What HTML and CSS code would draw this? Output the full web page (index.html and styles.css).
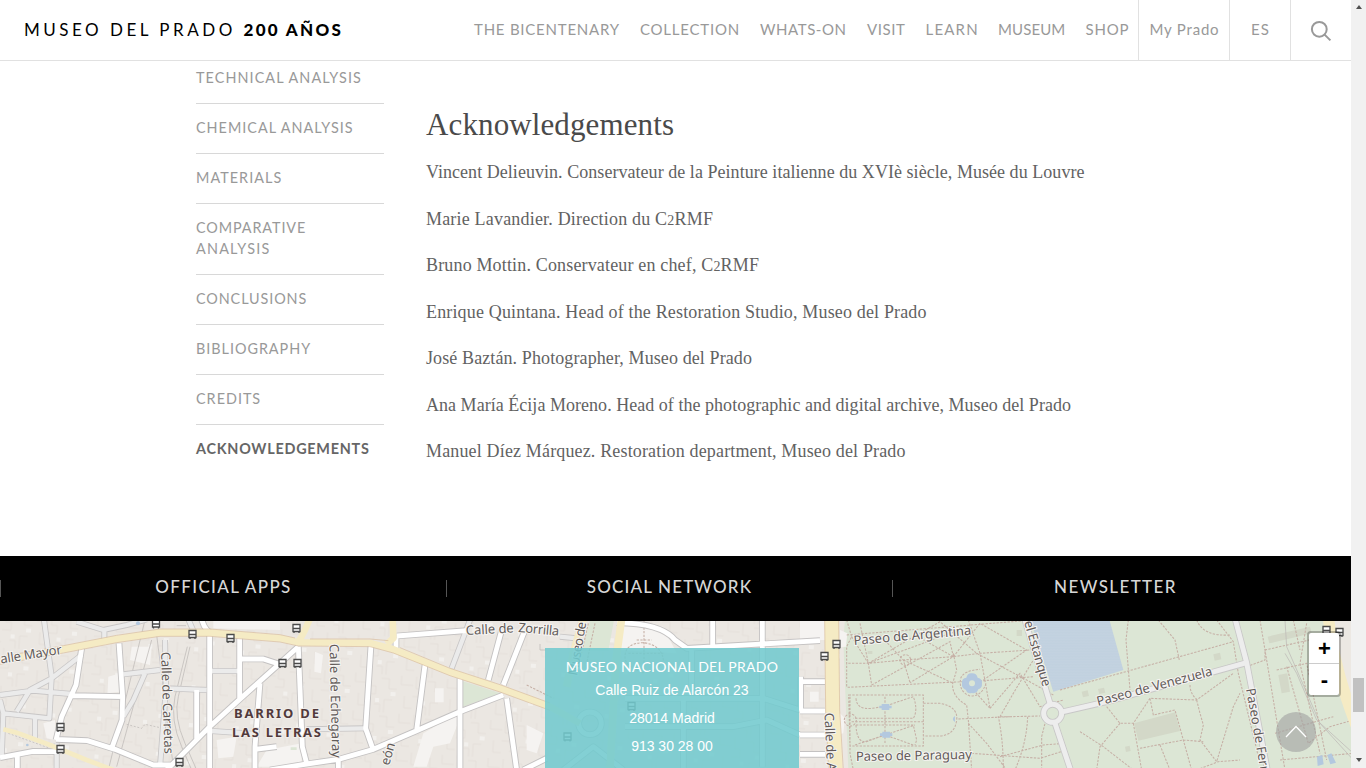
FILE: index.html
```html
<!DOCTYPE html>
<html lang="en">
<head>
<meta charset="utf-8">
<title>Acknowledgements - Museo Nacional del Prado</title>
<link rel="stylesheet" href="styles.css">
</head>
<body>
<div class="page">
  <header class="header">
    <a class="logo"><span class="logo-name">MUSEO DEL PRADO</span><span class="logo-years">200 AÑOS</span></a>
    <nav class="nav">
      <a>THE BICENTENARY</a><a class="n2">COLLECTION</a><a class="n3">WHATS-ON</a><a class="n4">VISIT</a><a class="n5">LEARN</a><a class="n6">MUSEUM</a><a class="n7">SHOP</a>
    </nav>
    <a class="cell my-prado">My Prado</a>
    <a class="cell lang">ES</a>
    <a class="cell search"><svg width="22" height="22" viewBox="0 0 22 22"><circle cx="9.3" cy="9.3" r="7.4"/><path d="M14.6 14.6L20.4 20.4"/></svg></a>
  </header>

  <main class="main">
    <ul class="index">
      <li class="i1">TECHNICAL ANALYSIS</li>
      <li class="i2">CHEMICAL ANALYSIS</li>
      <li class="i3">MATERIALS</li>
      <li class="i4">COMPARATIVE <span class="i5">ANALYSIS</span></li>
      <li class="i6">CONCLUSIONS</li>
      <li class="i7">BIBLIOGRAPHY</li>
      <li class="i8">CREDITS</li>
      <li class="current">ACKNOWLEDGEMENTS</li>
    </ul>
    <article class="article">
      <h2>Acknowledgements</h2>
      <p class="p1">Vincent Delieuvin. Conservateur de la Peinture italienne du XVIè siècle, Musée du Louvre</p>
      <p class="p2">Marie Lavandier. Direction du C<small>2</small>RMF</p>
      <p class="p3">Bruno Mottin. Conservateur en chef, C<small>2</small>RMF</p>
      <p class="p4">Enrique Quintana. Head of the Restoration Studio, Museo del Prado</p>
      <p class="p5">José Baztán. Photographer, Museo del Prado</p>
      <p class="p6">Ana María Écija Moreno. Head of the photographic and digital archive, Museo del Prado</p>
      <p class="p7">Manuel Díez Márquez. Restoration department, Museo del Prado</p>
    </article>
  </main>

  <div class="tabs">
    <a class="t1">OFFICIAL APPS</a><a class="t2">SOCIAL NETWORK</a><a class="t3">NEWSLETTER</a>
  </div>

  <section class="map">
    <svg class="map-canvas" width="1351" height="147" viewBox="0 621 1351 147">
      <defs>
        <g id="bus"><path d="M-3.5 -4H3.5V3H-3.5ZM-3.5 0H3.5M-2.5 3V4.6M2.5 3V4.6" fill="#fff" stroke="#4a4a4a" stroke-width="1.3"/></g>
        <pattern id="blocks" width="46" height="38" patternUnits="userSpaceOnUse" patternTransform="rotate(4)">
          <path d="M3 0V12H9V20H0M14 4H22V14H30M18 38V25H26M34 0V9H46M38 20V32H46M8 30H14V38" fill="none" stroke="#e2ddd7" stroke-width=".7"/>
          <path d="M24 17h5v4h-5zM9 24h4v4h-4z" fill="#f2f0ed"/>
        </pattern>
        <pattern id="waves" width="10" height="8" patternUnits="userSpaceOnUse"><path d="M0 4Q2.5 1.500 5 4T10 4" fill="none" stroke="#b7cadc" stroke-width=".8"/></pattern>
        <g id="lanes">
          <g transform="translate(0 610) scale(.33333)">
            <path d="M132 30L155 200L148 325L10 310M245 135L155 205L90 240L50 305M0 255L100 242L215 252M0 270L10 310L5 440M370 193L480 180M435 190L400 270L370 320M495 90L498 235L620 240M498 235L480 470M635 183H715M635 363L765 372M105 325V390M170 400V480M230 35L310 60L380 45L440 28M313 60V95M565 28L580 62"/>
            <path d="M1410 30L1355 175M920 358L1095 355M1680 80L1730 85"/>
          </g>
        </g>
        <g id="roads">
          <g transform="translate(0 610) scale(.33333)">
            <path d="M245 115L228 225L185 320L168 390M357 100L368 260L366 330L335 415M215 257L370 260M168 388L262 392L345 418L460 465H520M0 443L100 424L170 425M52 430V480M629 75V480M719 85V265M895 110L840 160L719 268L629 350L535 445L500 480M719 147L790 147L845 165M590 240V390M780 220L765 410V480M765 418L830 410M605 28Q615 65 640 72"/>
            <path d="M895 110L907 410L920 460M1113 105L1097 355L1118 415M1275 165L1250 360M810 480L920 462L1015 448L1120 418L1250 362L1380 305L1510 255M1380 205V480M1190 78L1400 62M1505 60L1465 210M1575 60L1510 225M1520 265L1550 480M1188 85V115M1015 452V480M1640 445L1570 480"/>
            <path d="M2138 30V110M2287 30V470M1850 38Q1985 40 2025 90L2060 115L2460 92M2400 215H2475M2400 303H2475M2400 375H2475M2400 433H2475M2402 200V300M2075 120V250M1875 265L2290 265L2400 300M1875 350H2200L2300 330L2400 375M2050 260V480M1690 480L1780 410L1870 480"/>
            <circle cx="1770" cy="340" r="34"/>
          </g>
        </g>
        <g id="avenues">
          <g transform="translate(0 610) scale(.33333)">
            <path stroke-width="20" d="M0 152L190 118L350 87L480 68H630L840 85L895 97L1110 99L1180 118L1350 186L1500 235L1650 290L1740 340M895 97L915 60L930 25M1178 25L1180 85L1160 102"/>
            <path stroke-width="14" d="M10 358L50 368L150 405L260 450L340 480"/>
            <path stroke-width="23" d="M1865 25L1848 150L1830 480M1750 25L1720 130L1700 230"/>
            <path stroke-width="42" d="M2495 20L2498 300L2507 485"/>
            <path stroke-width="34" d="M3985 20Q4000 170 4070 350L4120 480"/>
          </g>
        </g>
        <g id="walks">
          <g transform="translate(0 610) scale(.33333)">
            <path d="M3075 30L3150 280M3190 305L3320 275L3740 158M3705 25L3740 158L3802 480M3165 340L3215 490"/>
            <circle cx="3158" cy="310" r="27"/>
          </g>
        </g>
      </defs>

      <rect y="620" width="1351" height="148" fill="#ebe7e2"/>
      <rect y="620" width="840" height="148" fill="url(#blocks)"/>
      <g transform="translate(0 610) scale(.33333)">
        <g fill="#f5f3f1">
          <path d="M395 110H455L450 165L390 150ZM325 200L360 190V245L322 250ZM650 390L710 380L700 440L655 445ZM640 28L840 28V60L640 55ZM130 340L165 330V390L140 385ZM1305 235h26v42h-26zM945 125l24 10-6 55-20-5zM1580 345l50 25-20 60-30-10zM2430 245h26v30h-26zM800 420L905 400V470H770ZM1390 300L1350 400L1300 410L1280 470H1240L1270 370ZM2400 30H2480V90H2400ZM1870 40L1990 50L2030 130L1860 120Z"/>
        </g>
        <path d="M1385 212L1500 250L1385 292ZM1770 30H1842L1825 122H1745ZM872 412h18v8h-18zM2530 90L2535 28H4060V480H2545Z" fill="#dce6d5"/>
        <path d="M3985 20H4060V350Q4000 200 3985 20Z" fill="#ece8e3"/>
        <path d="M2520 60L2542 70L2538 110L2520 112ZM2520 310L2535 325L2530 370L2520 372Z" fill="#f5f3f1"/>
        <path d="M3090 25H3327L3370 180L3160 245Z" fill="#c3d2e0"/>
        <path d="M3090 25H3327L3370 180L3160 245Z" fill="url(#waves)"/>
        <g fill="#d3d8c8">
          <path d="M3402 340L3525 307L3540 363L3415 392ZM3803 80L3930 50L3935 70L3808 100ZM3835 195L3862 190L3870 245L3845 250ZM3640 133l20-5 4 20-20 4ZM3245 245l18-4 4 17-18 4ZM3294 237l18-4 4 15-18 4ZM3375 410l14-3 3 16-14 3ZM3050 60h16v18h-16ZM2603 123h14v9h-14Z"/>
        </g>
        <g fill="none" stroke="#bdb9b6" stroke-width="2.200">
          <path d="M435 30L325 480M455 90L350 470M470 75L520 470M570 110L535 260Q520 320 555 400L590 480M562 110L525 260Q510 330 545 410L575 480M3855 130L3890 190L3950 330L4060 430M3855 30L3860 110L3960 340L4060 450"/>
          <path stroke-dasharray="6 5" d="M380 343L425 355L435 343L490 355M25 370L150 415"/>
          <path d="M1620 102v18h18M530 47h28"/>
        </g>
      </g>
      <g transform="translate(0 610) scale(.33333)" fill="none" stroke="#c6b0a6" stroke-width="3.200" stroke-dasharray="7 4">
        <path d="M1910 90H1955M1925 185Q1875 170 1875 140Q1875 100 1930 98Q1985 105 1990 150Q1975 185 1925 188ZM1932 30V180M1885 130H1990M1765 40L1740 150M1785 40L1760 160M1580 225L1660 265"/>
        <path d="M2540 30L2555 80L2540 110V230M2540 75L3100 30M2555 80L2605 160L2710 150L2860 140L2940 130L3090 120M2580 40L2605 160L2615 225M2605 160L2750 75L2820 35L2930 130L3080 210L3160 255M2640 75L2710 150L2730 218M2710 150L2860 220M2545 160L2605 160L2850 70M2615 225L2850 95L2860 140L2730 218M2860 140L2745 75M2905 30L2940 130L2970 295M2860 140L2940 40L3080 120L2950 210M2970 295L3060 190L3120 290L3190 270M3000 320L3040 250L3100 150M2543 232L2950 212L3100 200M2860 130L2870 180L2858 220Q2855 260 2900 285L2905 330L2915 480M2958 220Q2945 260 2910 258Q2875 245 2882 205Q2890 182 2940 178"/>
        <path d="M2546 255H2770V408H2550ZM2568 265Q2570 300 2615 295L2650 290L2740 260Q2755 300 2740 325H2560M2568 345H2740L2750 390L2745 405M2568 345Q2570 400 2600 395L2655 375L2740 405M2655 260V400M2555 335H2770M2565 405L2655 375L2745 345M2770 280H2820Q2875 290 2870 330Q2865 375 2820 378H2770M2550 260V430L2560 480M2875 327L3030 320L3120 318M3030 320L2995 320Q3010 390 3010 480M3083 320Q3080 400 3045 480M2905 340L2960 400L3020 480M3000 440L3130 405L3190 400M3140 320L3125 380V480M2915 430L3120 445L3200 420M2920 240L2970 295"/>
        <circle cx="2716" cy="150" r="16"/><circle cx="2551" cy="330" r="18"/>
        <path d="M3180 240L3700 95M3385 30L3378 90L3390 240M3475 30L3525 90L3538 150M3590 30Q3610 80 3690 75M3650 30L3700 95L3715 190L3780 460M3320 290L3360 340H3400L3450 265L3590 270L3700 190M3590 270L3600 310L3610 345L3600 390L3650 455L3700 290L3720 250M3400 340L3425 480M3360 340L3300 410L3290 480M3240 365L3310 410L3400 480M3420 415L3550 390L3610 395M3450 265L3460 315L3525 300L3550 390L3575 480M3480 405L3510 480M3570 225Q3570 250 3590 268M3590 480L3655 455L3720 450M3740 170L3795 150V120L3950 85M3780 30L3795 120L3855 480M3830 180L3920 160L3980 450M3860 170L3925 400L3990 350L4060 330M3900 160L3960 430M3920 40L3900 160M3840 450L4060 430M3825 370L4000 320M3880 30L3900 120"/>
      </g>
      <g fill="none" stroke-linejoin="round">
        <use href="#lanes" stroke="#c8c6c6" stroke-width="18"/>
        <use href="#roads" stroke="#c4c2c2" stroke-width="20"/>
        <use href="#walks" stroke="#c8c7c7" stroke-width="20"/>
        <use href="#lanes" stroke="#ebebeb" stroke-width="13"/>
        <use href="#roads" stroke="#fff" stroke-width="14.500"/>
        <use href="#walks" stroke="#ededed" stroke-width="15"/>
        <use href="#avenues" stroke="#f5ebc4"/>
      </g>
      <g transform="translate(0 610) scale(.33333)" fill="none" stroke="#d9bc9b" stroke-width="2">
        <path d="M0 141L190 107L350 76L480 57H630L840 74L885 84M0 163L190 129L350 98L480 79H630L840 96L895 108L1110 110L1180 129L1350 197L1500 246L1650 301M930 87H1110L1165 92M1200 113L1350 175L1500 224L1650 279M2474 30L2477 300L2486 480M2516 30L2519 300L2530 480"/>
      </g>
      <g fill="#b3c8df" transform="translate(0 610) scale(.33333)">
        <path d="M2916 190Q2930 190 2933 203Q2948 206 2946 220Q2947 235 2935 238Q2930 252 2916 249Q2902 253 2898 240Q2884 235 2886 220Q2884 205 2899 203Q2903 188 2916 190Z"/>
        <circle cx="2916" cy="220" r="9" fill="#dce6d5"/>
        <path d="M2645 282h23v5h7v8h-7v5h-23v-5h-7v-8h7zM2647 365h23v5h7v8h-7v5h-23v-5h-7v-8h7zM2865 318Q2852 327 2865 336ZM3951 440l16-5 4 28-18 5ZM3982 435l12-5 14 28-17 5Z"/>
        <circle cx="414" cy="40" r="6"/><circle cx="82" cy="405" r="4"/>
      </g>
      <g>
        <use href="#bus" x="156" y="624"/><use href="#bus" x="192.500" y="634.500"/><use href="#bus" x="230.500" y="638.500"/><use href="#bus" x="296.500" y="628.500"/><use href="#bus" x="282.500" y="663.500"/><use href="#bus" x="297.500" y="663.500"/><use href="#bus" x="60.500" y="727.500"/><use href="#bus" x="60.500" y="749.500"/><use href="#bus" x="179.500" y="762.500"/><use href="#bus" x="824.500" y="656.500"/><use href="#bus" x="836.500" y="644.500"/><use href="#bus" x="631.500" y="706.500"/><use href="#bus" x="567.500" y="737"/><use href="#bus" x="1326.500" y="630.500"/><use href="#bus" x="1339.500" y="632.500"/>
      </g>
      <g class="streets">
        <text transform="translate(1 663.500) rotate(-9)" textLength="62">alle Mayor</text>
        <text transform="translate(161 652) rotate(88)" textLength="102">Calle de Carretas</text>
        <text transform="translate(329.500 644) rotate(88.700)" textLength="114">Calle de Echegaray</text>
        <text transform="translate(466 635) rotate(-3)" textLength="48">Calle de</text>
        <text transform="translate(518 632) rotate(5)" textLength="41">Zorrilla</text>
        <text transform="translate(577 676) rotate(-80)" textLength="54">Museo de</text>
        <text transform="translate(389 766) rotate(-74)" textLength="23">eón</text>
        <text transform="translate(824.500 713) rotate(87.500)" textLength="58">Calle de A</text>
        <text transform="translate(854 645) rotate(-5)" textLength="118">Paseo de Argentina</text>
        <text transform="translate(856 761) rotate(-1)" textLength="116">Paseo de Paraguay</text>
        <text transform="translate(1024 622) rotate(74)" textLength="68">el Estanque</text>
        <text transform="translate(1098 706) rotate(-15)" textLength="119">Paseo de Venezuela</text>
        <text transform="translate(1246 689) rotate(80)" textLength="84">Paseo de Ferr</text>
      </g>
      <g class="district">
        <text x="234" y="718" textLength="85">BARRIO DE</text>
        <text x="232" y="737" textLength="89">LAS LETRAS</text>
      </g>
    </svg>

    <address class="card">
      <strong>MUSEO NACIONAL DEL PRADO</strong>
      <span>Calle Ruiz de Alarcón 23</span>
      <span>28014 Madrid</span>
      <span>913 30 28 00</span>
    </address>
    <div class="zoom"><a>+</a><a>-</a></div>
    <a class="to-top"><svg width="40" height="40" viewBox="0 0 40 40"><path d="M10 25L20 14.500L30 25"/></svg></a>
  </section>
</div>
<div class="scrollbar"><i class="arrow-up"></i><i class="thumb"></i><i class="arrow-down"></i></div>
</body>
</html>
```
FILE: styles.css
```css
* { box-sizing: border-box; }
body {
  margin: 0;
  height: 768px;
  display: flex;
  overflow: hidden;
  background: #fff;
  font-family: Lato, sans-serif;
}
.page { width: 1351px; display: flex; flex-direction: column; }

.header {
  height: 61px;
  display: flex;
  line-height: 59px;
  border-bottom: 1px solid #e1e1e1;
  font-size: 15px;
  color: #999;
  white-space: nowrap;
}
.logo { display: flex; width: 474px; padding-left: 24px; font-size: 17px; line-height: 60px; color: #000; }
.logo-name { width: 219.5px; letter-spacing: 3.5px; }
.logo-years { font-weight: 900; letter-spacing: 2.3px; }
.nav {
  display: grid;
  grid-template-columns: 166px 120px 107px 58.5px 72.5px 87.5px 52.5px;
  letter-spacing: .77px;
}
.n3 { letter-spacing: .56px; }
.n4 { letter-spacing: .6px; }
.n5 { letter-spacing: 1.2px; }
.n6 { letter-spacing: .1px; }
.cell { border-left: 1px solid #e1e1e1; }
.my-prado { width: 91px; padding-left: 10.5px; letter-spacing: .8px; }
.lang { width: 61px; padding-left: 21px; letter-spacing: 1px; }
.search { width: 61px; display: flex; align-items: center; padding: 1px 0 0 18.5px; }
.search svg { fill: none; stroke: #999; stroke-width: 2; }

.main { height: 495px; display: flex; padding-left: 196px; }
.index {
  width: 188px;
  margin: 0;
  padding: 0;
  list-style: none;
  font-size: 14.4px;
  line-height: 21px;
  color: #999;
}
.index li { padding: 13px 0 15px; border-bottom: 1px solid #d8d8d8; }
.index li:first-child { padding-top: 6px; }
.index .current { border: 0; font-weight: 700; color: #666; letter-spacing: .75px; }
.i1 { letter-spacing: 1.08px; }
.i2 { letter-spacing: 1px; }
.i3 { letter-spacing: 1.05px; }
.i4 { letter-spacing: .9px; }
.i5 { display: block; letter-spacing: 1.2px; }
.i6 { letter-spacing: .9px; }
.i7 { letter-spacing: .97px; }
.i8 { letter-spacing: 1px; }

.article {
  padding: 44px 0 0 42px;
  font-family: "Liberation Serif", serif;
  color: #626262;
  white-space: nowrap;
}
.article h2 {
  margin: 0 0 13px;
  font-size: 31px;
  font-weight: 400;
  line-height: 40px;
  letter-spacing: .12px;
  color: #4a4a4a;
}
.article p { height: 28px; margin: 0 0 18.5px; font-size: 18px; line-height: 28px; }
.article small { font-size: 14px; line-height: 0; }
.p1 { letter-spacing: .043px; }
.p2 { letter-spacing: .19px; }
.p3 { letter-spacing: .16px; }
.p4 { letter-spacing: .158px; }
.p5 { letter-spacing: .104px; }
.p6 { letter-spacing: .032px; }
.p7 { letter-spacing: .155px; }

.tabs {
  height: 65px;
  display: flex;
  align-items: center;
  background: #000;
  color: #d6d6d6;
  font-size: 17px;
  font-weight: 500;
  line-height: 14px;
  text-align: center;
}
.tabs a { width: 446px; height: 17px; border-left: 1px solid #555; }
.t1 { letter-spacing: 1.35px; }
.t2 { letter-spacing: 1.15px; }
.t3 { letter-spacing: 1.4px; }

.map { position: relative; height: 147px; overflow: hidden; }
.map-canvas { display: block; }
.streets text {
  font: 13px "Noto Sans", sans-serif;
  fill: #625b59;
  stroke: #f6f4f2;
  stroke-width: 2px;
  paint-order: stroke;
}
.district text {
  font: 700 13px "Noto Sans", sans-serif;
  fill: #513a3c;
  stroke: #f1eeea;
  stroke-width: 2px;
  paint-order: stroke;
}
.card {
  position: absolute;
  left: 545px;
  top: 27px;
  width: 254px;
  height: 120px;
  padding-top: 10px;
  display: flex;
  flex-direction: column;
  background: rgba(114, 202, 206, .88);
  color: #fff;
  text-align: center;
  font: 14px/28px "Liberation Sans", sans-serif;
}
.card strong { font: 400 14px/18px Lato, sans-serif; letter-spacing: .26px; }
.zoom {
  position: absolute;
  right: 10px;
  top: 10px;
  width: 34px;
  border: 2px solid rgba(0, 0, 0, .25);
  border-radius: 4px;
  background: #fff;
  background-clip: padding-box;
  font: 700 22px/31px "Liberation Sans", sans-serif;
  text-align: center;
}
.zoom a { display: block; height: 31px; padding-left: 1px; }
.zoom a:first-child { border-bottom: 1px solid #ccc; }
.to-top {
  position: absolute;
  left: 1276px;
  top: 91px;
  width: 40px;
  height: 40px;
  border-radius: 50%;
  background: rgba(160, 160, 160, .6);
}
.to-top path { fill: none; stroke: #fff; stroke-width: 1.3; }

.scrollbar {
  width: 15px;
  display: flex;
  flex-direction: column;
  align-items: center;
  background: #f1f1f1;
}
.scrollbar i { border: 3.5px solid transparent; }
.scrollbar .arrow-up { margin-top: 2px; border-bottom: 4px solid #505050; }
.scrollbar .thumb { width: 11px; height: 34px; margin-top: 668.5px; border: 0; background: #c1c1c1; }
.scrollbar .arrow-down { margin-top: 46px; border-top: 4px solid #505050; }
```
